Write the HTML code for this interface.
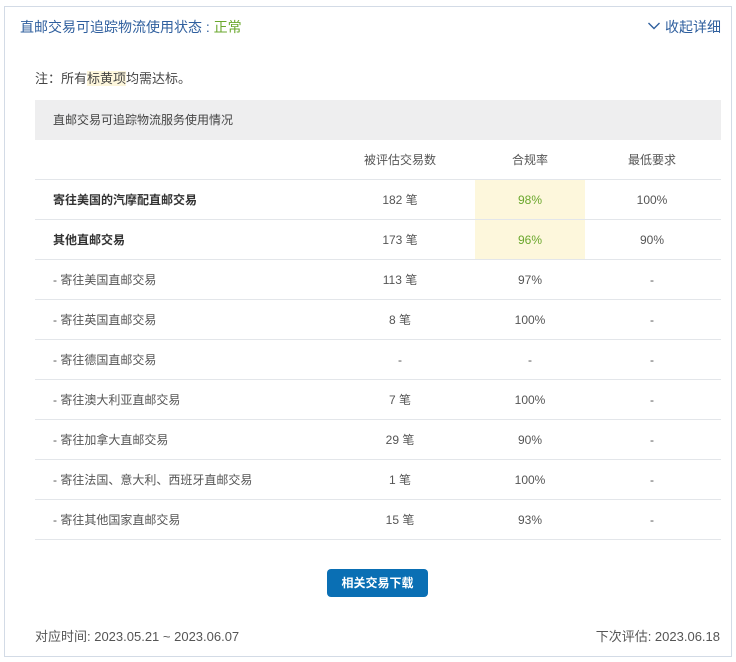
<!DOCTYPE html>
<html><head><meta charset="utf-8"><style>
*{margin:0;padding:0;box-sizing:border-box}
body{width:736px;height:662px;background:#fff;font-family:"Liberation Sans","Noto Sans CJK SC",sans-serif;position:relative;overflow:hidden}
.box{position:absolute;left:4px;top:6px;width:728px;height:651px;border:1px solid #d3dbe6}
.abs{position:absolute;white-space:nowrap}
.title{left:20px;top:17px;font-size:14px;color:#2f5f9e}
.title span{color:#6aa72c}
.toggle{right:15px;top:17px;font-size:14px;color:#2f5f9e}
.note{left:35px;top:68px;font-size:13px;color:#444}
.note span{background:#fdf6dc}
.thead{position:absolute;left:35px;top:100px;width:686px;height:40px;background:#eeeeef;font-size:12px;color:#444;padding-left:18px;line-height:41px}
.row{position:absolute;left:35px;width:686px;height:40px;border-bottom:1px solid #e3e6ea;font-size:12px;color:#555;line-height:41px}
.row div{position:absolute;top:0;height:39px;text-align:center}
.c0{left:18px;text-align:left!important}
.c1{left:305px;width:120px}
.c2{left:440px;width:110px}
.c3{left:557px;width:120px}
.y{background:#fdf7dc;color:#6aa72c}
.b{font-weight:bold;color:#333}
.btn{left:327px;top:569px;width:101px;height:28px;background:#0a6fb4;color:#fff;border-radius:4px;font-size:12px;text-align:center;line-height:28px;font-weight:bold}
.foot{top:626px;font-size:13px;color:#555}
</style></head><body>
<div class="box"></div>
<div class="abs title">直邮交易可追踪物流使用状态 : <span>正常</span></div>
<div class="abs toggle"><svg width="14" height="10" viewBox="0 0 14 10" style="vertical-align:1px"><path d="M1.5 2 L7 7.5 L12.5 2" fill="none" stroke="#2f5f9e" stroke-width="1.4"/></svg> 收起详细</div>
<div class="abs note">注：所有<span>标黄项</span>均需达标。</div>
<div class="thead">直邮交易可追踪物流服务使用情况</div>
<div class="row" style="top:140px"><div class="c1">被评估交易数</div><div class="c2">合规率</div><div class="c3">最低要求</div></div>
<div class="row" style="top:180px"><div class="c0 b">寄往美国的汽摩配直邮交易</div><div class="c1">182 笔</div><div class="c2 y">98%</div><div class="c3">100%</div></div>
<div class="row" style="top:220px"><div class="c0 b">其他直邮交易</div><div class="c1">173 笔</div><div class="c2 y">96%</div><div class="c3">90%</div></div>
<div class="row" style="top:260px"><div class="c0">- 寄往美国直邮交易</div><div class="c1">113 笔</div><div class="c2">97%</div><div class="c3">-</div></div>
<div class="row" style="top:300px"><div class="c0">- 寄往英国直邮交易</div><div class="c1">8 笔</div><div class="c2">100%</div><div class="c3">-</div></div>
<div class="row" style="top:340px"><div class="c0">- 寄往德国直邮交易</div><div class="c1">-</div><div class="c2">-</div><div class="c3">-</div></div>
<div class="row" style="top:380px"><div class="c0">- 寄往澳大利亚直邮交易</div><div class="c1">7 笔</div><div class="c2">100%</div><div class="c3">-</div></div>
<div class="row" style="top:420px"><div class="c0">- 寄往加拿大直邮交易</div><div class="c1">29 笔</div><div class="c2">90%</div><div class="c3">-</div></div>
<div class="row" style="top:460px"><div class="c0">- 寄往法国、意大利、西班牙直邮交易</div><div class="c1">1 笔</div><div class="c2">100%</div><div class="c3">-</div></div>
<div class="row" style="top:500px"><div class="c0">- 寄往其他国家直邮交易</div><div class="c1">15 笔</div><div class="c2">93%</div><div class="c3">-</div></div>
<div class="abs btn">相关交易下载</div>
<div class="abs foot" style="left:35px">对应时间: 2023.05.21 ~ 2023.06.07</div>
<div class="abs foot" style="right:16px">下次评估: 2023.06.18</div>
</body></html>
